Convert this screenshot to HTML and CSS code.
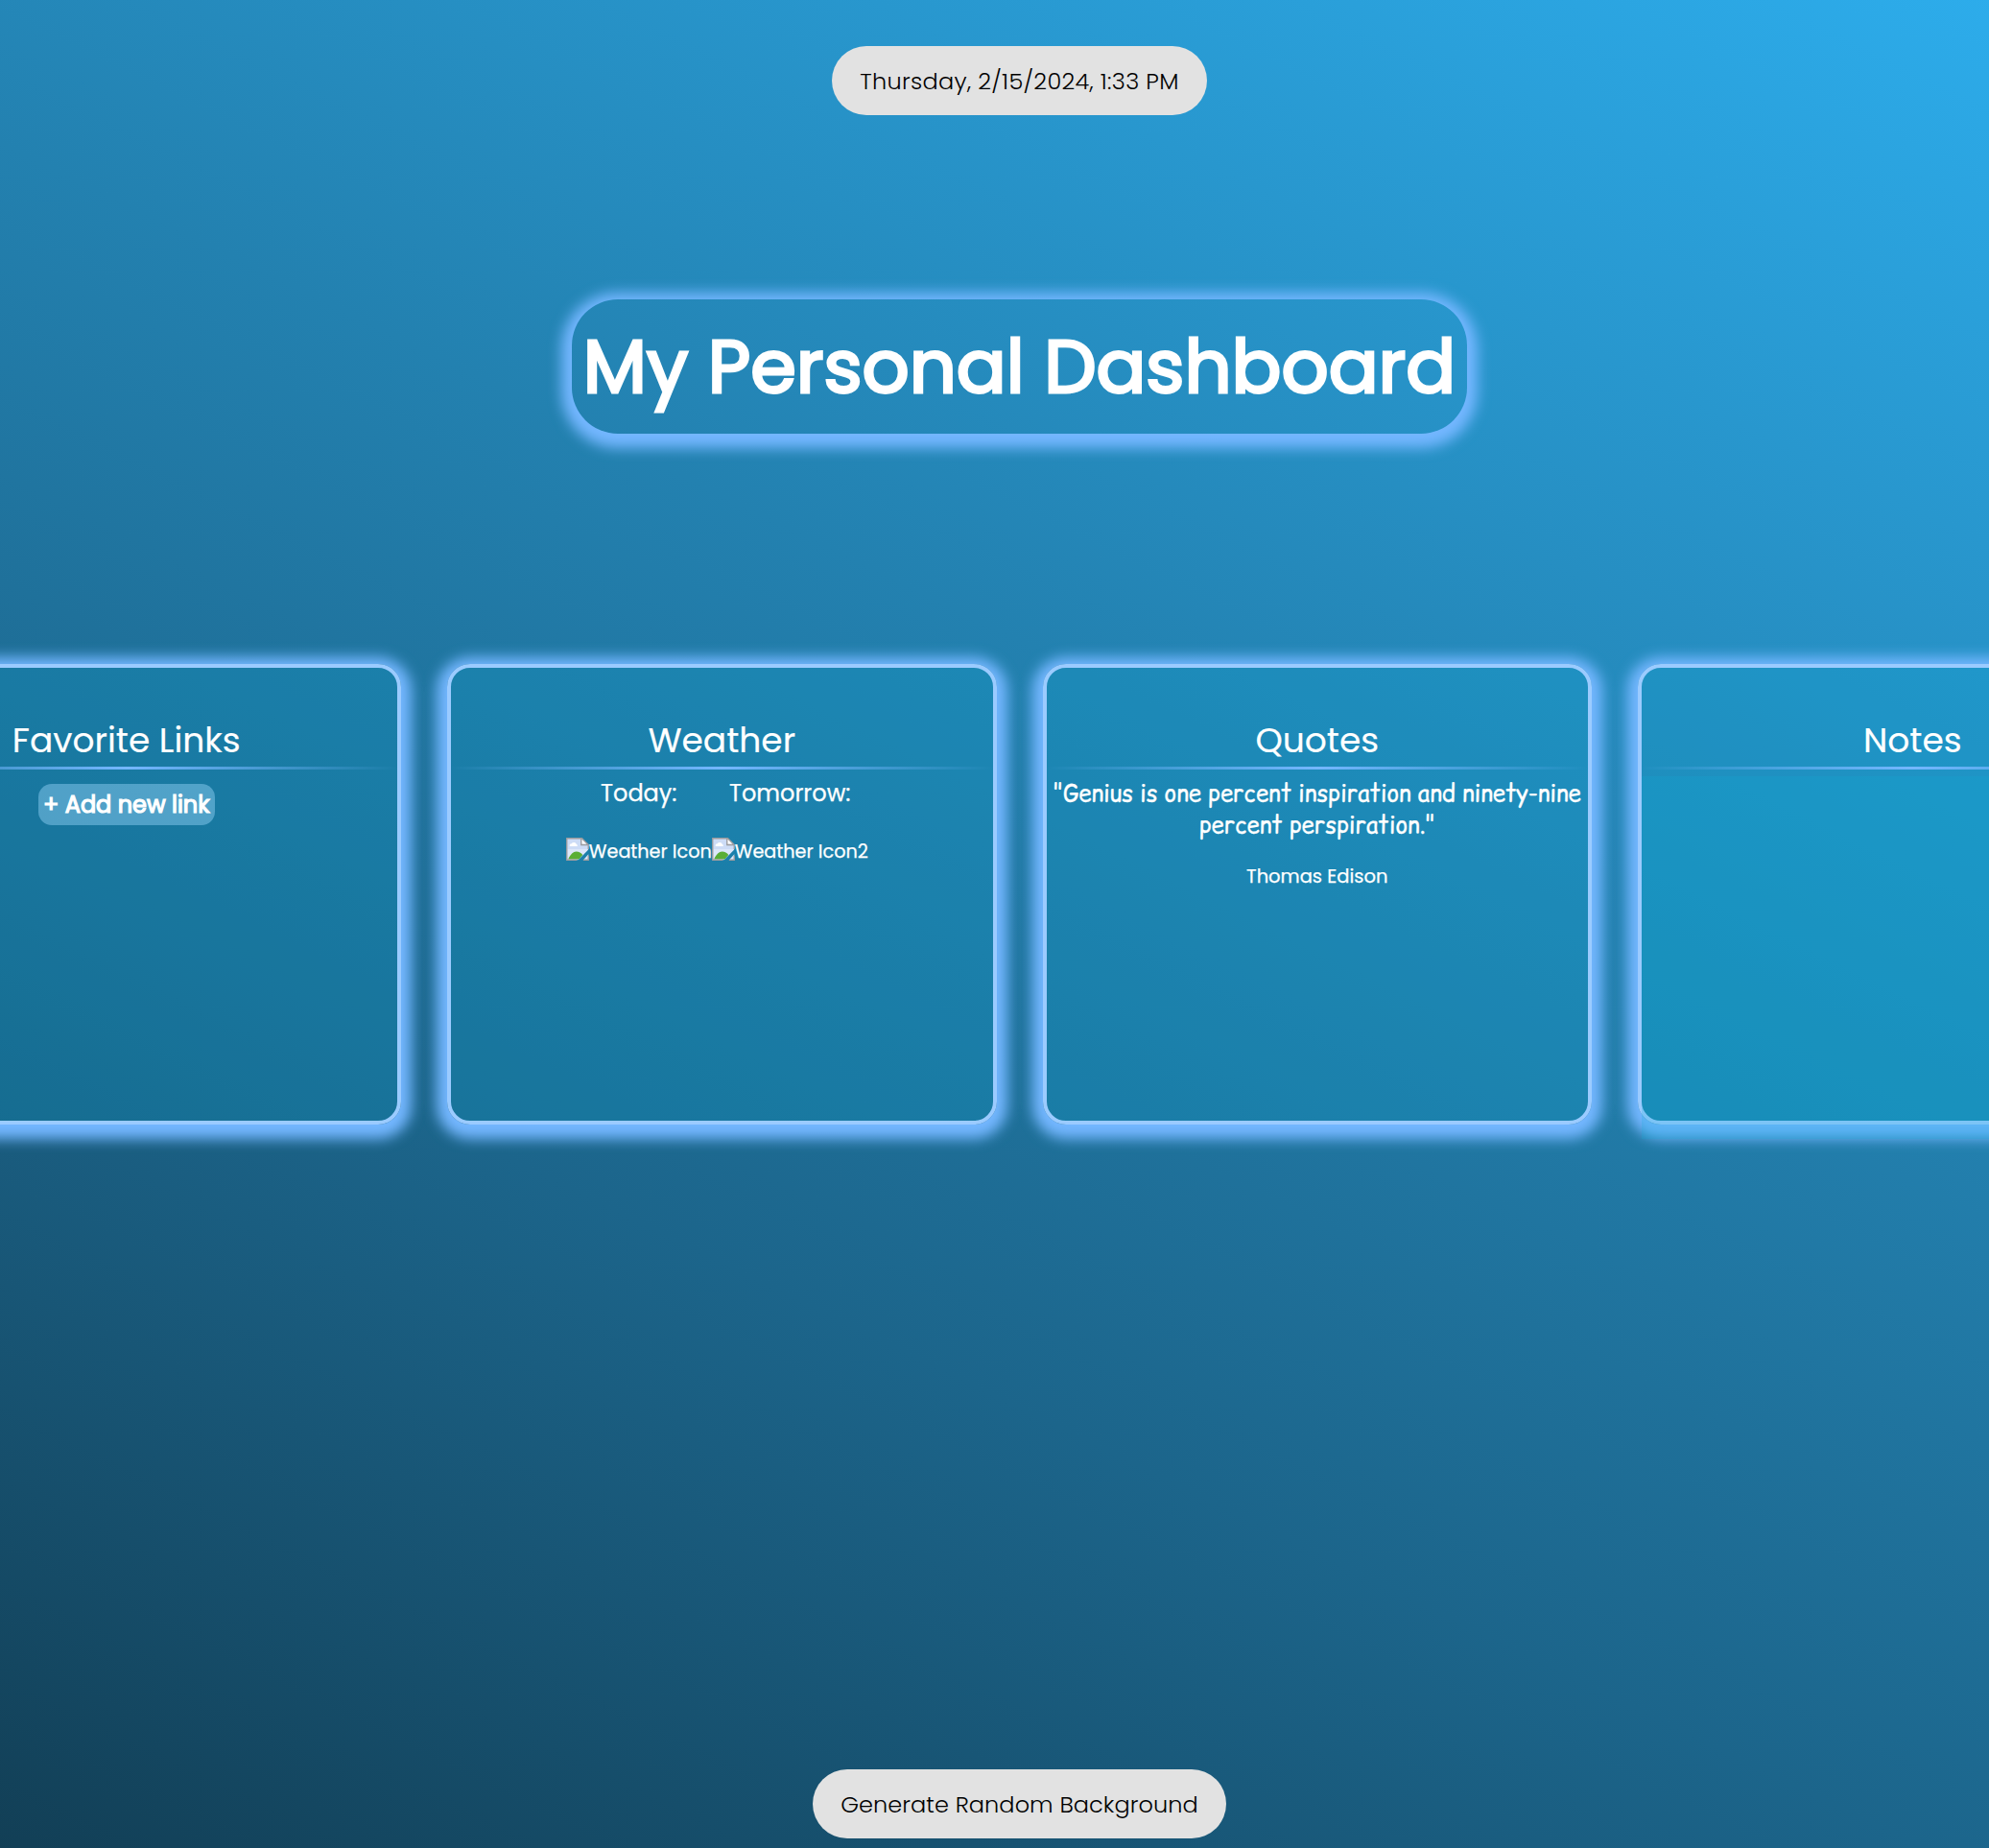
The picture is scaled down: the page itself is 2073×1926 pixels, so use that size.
FILE: index.html
```
<!DOCTYPE html>
<html lang="en">
<head>
<meta charset="utf-8">
<title>My Personal Dashboard</title>
<link rel="stylesheet" href="styles.css">
</head>
<body>
<svg class="defs" aria-hidden="true">
  <symbol id="broken-image" viewBox="0 0 16 16">
    <path d="M.5.5h10L15.500 5.500V15.500H.5z" fill="#cddcf6"/>
    <path d="M1 8h14v7H1z" fill="#dde7fa"/>
    <path d="M2.500 6a1.500 1.500 0 0 1 1.300-1.800 2 2 0 0 1 3.400.3 1.200 1.200 0 0 1 .6 1.500z" fill="#fff"/>
    <path d="M1.500 15c1.500-3.500 3.500-5.300 5.500-5.300s3.500 1 4.500 2.300l-2.500 3z" fill="#5aae35"/>
    <path d="M10.500.5v4h5z" fill="#fff"/>
    <path d="M15.500 8V5l-4.500-4.500H.5v15h7M10.500.5v4.500h5M12 15.500h3.500V12.500" fill="none" stroke="#9c9c9f" stroke-width=".9"/>
    <path d="M16 7.800V11l-4.500 5H8z" fill="#1c7faa"/>
  </symbol>
</svg>
<div class="page">
  <div class="pill pill-date">Thursday, 2/15/2024, 1:33 PM</div>
  <h1 class="title">My Personal Dashboard</h1>
  <main class="cards">
    <section class="card">
      <h2 class="card-title">Favorite Links</h2>
      <button class="add-link">+ Add new link</button>
    </section>
    <section class="card">
      <h2 class="card-title">Weather</h2>
      <div class="days"><span>Today:</span><span>Tomorrow:</span></div>
      <div class="icons">
        <span class="icon-item"><svg class="broken"><use href="#broken-image"/></svg><span>Weather Icon</span></span>
        <span class="icon-item"><svg class="broken"><use href="#broken-image"/></svg><span>Weather Icon2</span></span>
      </div>
    </section>
    <section class="card">
      <h2 class="card-title">Quotes</h2>
      <p class="quote">"Genius is one percent inspiration and ninety-nine<br>percent perspiration."</p>
      <p class="author">Thomas Edison</p>
    </section>
    <section class="card">
      <h2 class="card-title">Notes</h2>
      <div class="notes"></div>
    </section>
  </main>
  <button class="pill pill-random">Generate Random Background</button>
</div>
</body>
</html>
```
FILE: styles.css
```
* { box-sizing: border-box; }

html { overflow: hidden; }

body {
  margin: 0;
  width: 2073px;
  height: 1926px;
  overflow: hidden;
  font-family: Poppins, Inter, sans-serif;
  color: #fff;
}

.defs { display: none; }

.page {
  width: 2125px;
  height: 1926px;
  padding: 48px 0 10px;
  display: flex;
  flex-direction: column;
  align-items: center;
  background: linear-gradient(26deg, #123f56, #1c658b 33%, #2381b0 60%, #2dadec);
}

.pill {
  height: 72px;
  flex: none;
  display: flex;
  align-items: center;
  justify-content: center;
  border: 0;
  border-radius: 36px;
  background: #e2e2e2;
  color: #000;
  font-family: inherit;
  font-size: 24px;
  font-weight: 300;
}

.pill-date { width: 391px; letter-spacing: .29px; }
.pill-random { width: 431px; margin-top: auto; letter-spacing: .08px; }

.title {
  width: 933px;
  height: 140px;
  margin: 192px 0 240px;
  flex: none;
  display: flex;
  align-items: center;
  justify-content: center;
  border-radius: 48px;
  box-shadow: 0 4px 14px 11px #74b7ff;
  font-size: 76.800px;
  font-weight: 400;
  -webkit-text-stroke: 3px #fff;
  white-space: nowrap;
}

.cards {
  flex: none;
  width: 100%;
  display: flex;
  justify-content: center;
  gap: 48px;
}

.card {
  flex: none;
  width: 572.5px;
  height: 480px;
  padding-top: 48px;
  display: flex;
  flex-direction: column;
  align-items: center;
  border: 4px solid #9bcbff;
  border-radius: 24px;
  background: rgba(10, 172, 213, .21);
  box-shadow: 0 4px 14px 11px #74b7ff;
}

.card-title {
  width: 100%;
  height: 58px;
  margin: 0;
  flex: none;
  text-align: center;
  font-size: 36px;
  line-height: 56px;
  font-weight: 400;
  -webkit-text-stroke: .15px #fff;
  border-bottom: 3px solid;
  border-image: linear-gradient(90deg, transparent, #74b7ff, transparent) 1;
}

.add-link {
  width: 184px;
  height: 43px;
  margin-top: 15px;
  padding: 0;
  border: 0;
  border-radius: 14px;
  background: rgba(160, 220, 255, .42);
  color: #fff;
  font-family: inherit;
  font-size: 24px;
  font-weight: 400;
  -webkit-text-stroke: 1.200px #fff;
  white-space: nowrap;
}

.days,
.icons,
.quote,
.author { -webkit-text-stroke: .25px #fff; }

.days {
  display: flex;
  gap: 54.500px;
  margin-top: 7px;
  padding-left: 8px;
  font-size: 24px;
  line-height: 36px;
}

.icons { display: flex; margin-top: 28px; padding-right: 10px; }
.icon-item { display: flex; font-size: 19.200px; line-height: 30px; }
.broken { width: 24px; height: 24px; }

.quote {
  margin: 8px 0 0;
  font-family: "Comic Sans MS", "Comic Relief", Poppins, sans-serif;
  font-size: 24px;
  line-height: 33.400px;
  text-align: center;
  white-space: nowrap;
}

.author { margin: 22px 0 0; font-size: 19.500px; line-height: 30px; }

.notes {
  align-self: stretch;
  flex: none;
  height: 378px;
  margin-top: 7px;
  background: rgba(15, 172, 212, .22);
}
```
